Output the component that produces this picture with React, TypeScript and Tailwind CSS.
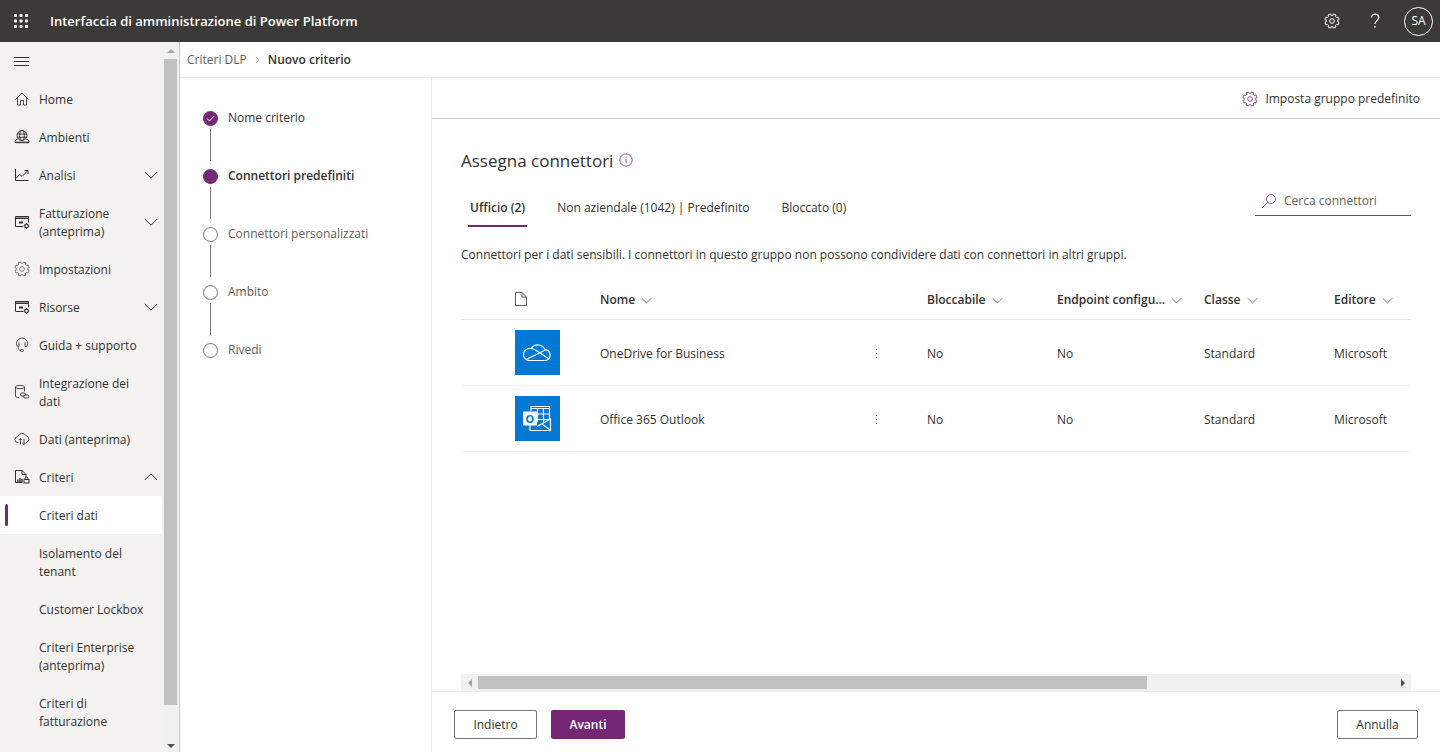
import { useState } from 'react';
import type { ReactNode } from 'react';
import clsx from 'clsx';

interface IconProps {
  className?: string;
}

interface NavItem {
  label: string;
  icon?: ReactNode;
  expand?: 'down' | 'up';
  active?: boolean;
}

// Outline of an eight-toothed gear on a 16x16 grid
const gearPoints = Array.from({ length: 8 }, (_, i) => {
  const corners: [number, number][] = [[-15, 5.6], [-11, 7.2], [11, 7.2], [15, 5.6]];
  return corners
    .map(([offset, r]) => {
      const a = ((i * 45 + 22.5 + offset) * Math.PI) / 180;
      return `${(8 + r * Math.cos(a)).toFixed(2)},${(8 + r * Math.sin(a)).toFixed(2)}`;
    })
    .join(' ');
}).join(' ');

function Icon({ className, children }: IconProps & { children: ReactNode }) {
  return (
    <svg
      viewBox="0 0 16 16"
      fill="none"
      stroke="currentColor"
      aria-hidden="true"
      className={clsx('shrink-0', className ?? 'h-4 w-4')}
    >
      {children}
    </svg>
  );
}

function GearIcon({ className }: IconProps) {
  return (
    <Icon className={className}>
      <polygon points={gearPoints} strokeLinejoin="round" />
      <circle cx="8" cy="8" r="2.3" />
    </Icon>
  );
}

function HomeIcon() {
  return (
    <Icon className="h-4 w-4 text-[#484644]">
      <path d="M1.5 8.5 8 2l6.5 6.5M3.5 7v7h3V9.5h3V14h3V7" />
    </Icon>
  );
}

function GlobeIcon() {
  return (
    <Icon>
      <circle cx="8" cy="6.5" r="5" />
      <ellipse cx="8" cy="6.5" rx="2.3" ry="5" />
      <path d="M3 5h10M3 8.3h10M3.5 10.5H2L.8 13.2h14.4L14 10.5h-1.5M1 13.7h14" />
    </Icon>
  );
}

function ChartIcon() {
  return (
    <Icon>
      <path d="M1.5 2v11.5h13M2 11.5l3.5-4 2.5 2L13.5 4M10.5 3.5H14V7" />
    </Icon>
  );
}

function WindowGearIcon() {
  return (
    <Icon>
      <path d="M9.5 12.5h-8v-10h13v6M1.5 4.5h13M1 3h14" />
      <path d="M5 8.5h4M6 7v3M8 7v3" />
      <circle cx="12.5" cy="12" r="1.8" strokeWidth="1.2" />
      <path d="M12.5 9.2v1M12.5 13.8v1M9.7 12h1M14.3 12h1" />
    </Icon>
  );
}

function HeadsetIcon() {
  return (
    <Icon className="h-4 w-4 text-[#484644]">
      <path d="M3.5 9.5C2.8 8.500 2.5 7.500 2.5 6.500a5.500 5.500 0 0 1 11 0c0 1-.3 2-1 3M3.500 9.500h1.500v-4M12.500 9.500H11v-4M4 10.500c.5 2 1.200 3 2.500 3" />
      <rect x="6.5" y="12.5" width="3" height="2" rx="1" />
    </Icon>
  );
}

function DatabaseLinkIcon() {
  return (
    <Icon className="h-4 w-4 text-[#484644]">
      <ellipse cx="6" cy="3" rx="4.5" ry="1.7" />
      <path d="M1.5 3v9c0 1 1.5 1.6 3.5 1.7M10.5 3v4.5" />
      <rect x="6.5" y="9" width="5" height="3" rx="1.5" />
      <rect x="9.5" y="11" width="5.5" height="3" rx="1.5" />
    </Icon>
  );
}

function CloudSyncIcon() {
  return (
    <Icon className="h-4 w-4 text-[#484644]">
      <path d="M4.5 11.5H4a2.9 2.9 0 0 1-.3-5.8 4.5 4.5 0 0 1 8.4-.9 3.4 3.4 0 0 1-.1 6.7" />
      <path d="M6.5 13.5v-6M4.8 9l1.7-1.7L8.2 9M10 7.5v6M8.3 12l1.7 1.7 1.7-1.7" />
    </Icon>
  );
}

function PolicyIcon() {
  return (
    <Icon>
      <path d="M8.5 13.5h-7v-12H8l4 4v3M8 1.5v4h4" />
      <path d="M4 13v-2.5M6 13V9M8 13v-3" strokeWidth="1.4" />
      <rect x="10" y="10.5" width="5" height="3.5" />
      <path d="M11.2 10.5V9.3a1.3 1.3 0 0 1 2.6 0v1.2" />
    </Icon>
  );
}

function PageIcon() {
  return (
    <svg viewBox="0 0 12 14" fill="none" stroke="#605e5c" className="h-[14px] w-[12px]" aria-hidden="true">
      <path d="M.5.5H7L11.500 5v8.500H.5zM7 .5V5h4.500" />
    </svg>
  );
}

function SearchIcon() {
  return (
    <Icon className="h-4 w-4 text-[#8f528f]">
      <circle cx="10" cy="6" r="4.5" />
      <path d="M6.8 9.2 1 15" />
    </Icon>
  );
}

function InfoIcon() {
  return (
    <Icon className="h-4 w-4 text-[#8f528f]">
      <circle cx="8" cy="7" r="6.2" />
      <path d="M8 6v4.5M8 3.5v1" />
    </Icon>
  );
}

function Chevron({ up = false, className }: IconProps & { up?: boolean }) {
  return (
    <svg
      viewBox="0 0 14 8"
      fill="none"
      stroke="currentColor"
      aria-hidden="true"
      className={clsx('shrink-0', className)}
    >
      <path d={up ? 'M.8 7 7 .8 13.2 7' : 'M.8 1 7 7.2 13.2 1'} />
    </svg>
  );
}

function OneDriveTile() {
  return (
    <svg
      viewBox="0 0 45 45"
      fill="none"
      stroke="white"
      strokeWidth="1.2"
      className="h-[45px] w-[45px] bg-[#0078d4]"
      role="img"
      aria-label="OneDrive"
    >
      <path d="M14.5 30.5a6 6 0 0 1 0-12h1.8a7.8 7.8 0 0 1 13.7 1.2 5.500 5.500 0 0 1 1 10.800z" />
      <path d="M11 29.500 24.500 23q3.500-2 6-3M16 18.500q2.500 0 5 1.700L34 29" />
    </svg>
  );
}

function OutlookTile() {
  return (
    <svg
      viewBox="0 0 45 45"
      fill="none"
      stroke="white"
      strokeWidth="1.2"
      className="h-[45px] w-[45px] bg-[#0078d4]"
      role="img"
      aria-label="Outlook"
    >
      <path d="M16 15v-4.500h18.500V23M16 12.500h18.500M22 18h12.500M22 23.500h12M22.500 12.500v13M28.500 12.500V26" />
      <path d="M15 29v5.500h20.500V23L22 30.500M27 28l8 6" />
      <rect x="8" y="15.5" width="14" height="14" rx="1" fill="white" stroke="none" />
      <text x="15" y="26.5" textAnchor="middle" fill="#0078d4" stroke="none" fontSize="11" fontWeight="700">
        O
      </text>
    </svg>
  );
}

const navItems: NavItem[] = [
  { label: 'Home', icon: <HomeIcon /> },
  { label: 'Ambienti', icon: <GlobeIcon /> },
  { label: 'Analisi', icon: <ChartIcon />, expand: 'down' },
  { label: 'Fatturazione (anteprima)', icon: <WindowGearIcon />, expand: 'down' },
  { label: 'Impostazioni', icon: <GearIcon className="h-4 w-4 text-[#797775]" /> },
  { label: 'Risorse', icon: <WindowGearIcon />, expand: 'down' },
  { label: 'Guida + supporto', icon: <HeadsetIcon /> },
  { label: 'Integrazione dei dati', icon: <DatabaseLinkIcon /> },
  { label: 'Dati (anteprima)', icon: <CloudSyncIcon /> },
  { label: 'Criteri', icon: <PolicyIcon />, expand: 'up' },
  { label: 'Criteri dati', active: true },
  { label: 'Isolamento del tenant' },
  { label: 'Customer Lockbox' },
  { label: 'Criteri Enterprise (anteprima)' },
  { label: 'Criteri di fatturazione' },
];

const steps = [
  { label: 'Nome criterio', state: 'done' },
  { label: 'Connettori predefiniti', state: 'current' },
  { label: 'Connettori personalizzati', state: 'todo' },
  { label: 'Ambito', state: 'todo' },
  { label: 'Rivedi', state: 'todo' },
];

const tabs = ['Ufficio (2)', 'Non aziendale (1042) | Predefinito', 'Bloccato (0)'];

const connectors = [
  { name: 'OneDrive for Business', tile: <OneDriveTile /> },
  { name: 'Office 365 Outlook', tile: <OutlookTile /> },
];

function Header() {
  return (
    <header className="flex h-[42px] shrink-0 items-center bg-[#3b3a39] pl-[14px] pr-[7px] text-white">
      <button aria-label="Avvio app">
        <svg viewBox="0 0 14 14" fill="currentColor" className="h-[14px] w-[14px]" aria-hidden="true">
          {[0, 5.5, 11].map((y) =>
            [0, 5.5, 11].map((x) => <rect key={`${x}-${y}`} x={x} y={y} width="3" height="3" rx="1" />)
          )}
        </svg>
      </button>
      <h1 className="ml-[22px] flex-1 text-[13px] font-semibold">
        Interfaccia di amministrazione di Power Platform
      </h1>
      <button aria-label="Impostazioni" className="mr-[27px]">
        <GearIcon />
      </button>
      <button aria-label="Guida" className="mr-[21px] w-4">
        <svg
          viewBox="0 0 16 16"
          fill="none"
          stroke="currentColor"
          strokeWidth="1.2"
          className="h-4 w-4"
          aria-hidden="true"
        >
          <path d="M4.5 4.5C4.5 2.5 6 1.2 8 1.2s3.7 1.2 3.7 3.3c0 3-3.7 3.2-3.7 6.5M8 13v1.8" />
        </svg>
      </button>
      <button className="h-[29px] w-[29px] rounded-full border border-white">SA</button>
    </header>
  );
}

function Sidebar() {
  return (
    <aside className="flex w-[180px] shrink-0 border-r border-[#c8c6c4] bg-[#f3f2f1]">
      <nav className="w-[162px] overflow-hidden">
        <button aria-label="Comprimi menu" className="flex h-[38px] items-center pl-[14px]">
          <svg viewBox="0 0 15 11" stroke="currentColor" className="h-[11px] w-[15px]" aria-hidden="true">
            <path d="M0 1.5h15M0 5.5h15M0 9.5h15" />
          </svg>
        </button>
        <ul>
          {navItems.map((item) => (
            <li key={item.label}>
              <a
                href="#"
                aria-current={item.active ? 'page' : undefined}
                className={clsx('flex items-center pr-[4px]', item.active && 'rounded-r-xs bg-white font-medium')}
              >
                <span className={clsx('ml-[5px] h-[22px] w-[3px] rounded-full', item.active && 'bg-[#742774]')} />
                <span className="ml-[6px] mr-[9px] w-4">{item.icon}</span>
                <span className={clsx('flex-1 pb-[9px] pt-[11px]', !item.expand && 'pr-[14px]')}>{item.label}</span>
                {item.expand && <Chevron up={item.expand === 'up'} className="h-[8px] w-[14px]" />}
              </a>
            </li>
          ))}
        </ul>
      </nav>
      {/* Scrollbar */}
      <div className="flex w-[17px] flex-col items-center bg-[#f1f1f1]">
        <div className="flex h-[17px] items-center">
          <svg viewBox="0 0 8 4" className="h-[4px] w-[8px]" fill="#a3a3a3" aria-hidden="true">
            <path d="M0 4 4 0l4 4z" />
          </svg>
        </div>
        <div className="flex w-[13px] flex-1 flex-col">
          <div className="h-[95%] bg-[#c1c1c1]" />
        </div>
        <div className="flex h-[13px] items-center">
          <svg viewBox="0 0 8 4" className="h-[4px] w-[8px]" fill="#505050" aria-hidden="true">
            <path d="M0 0l4 4 4-4z" />
          </svg>
        </div>
      </div>
    </aside>
  );
}

function Steps() {
  return (
    <ol className="flex w-[252px] shrink-0 flex-col border-r border-[#edebe9] pl-[23px] pt-8">
      {steps.map((step, i) => (
        <li key={step.label} aria-current={step.state === 'current' ? 'step' : undefined}>
          <div
            className={clsx(
              'flex h-4 items-center gap-[10px]',
              step.state === 'todo' && 'text-[#605e5c]',
              step.state === 'current' && 'font-semibold'
            )}
          >
            <span
              className={clsx(
                'flex h-[15px] w-[15px] items-center justify-center rounded-full border',
                step.state === 'todo' ? 'border-[#797775]' : 'border-[#742774] bg-[#742774]'
              )}
            >
              {step.state === 'done' && (
                <svg viewBox="0 0 9 9" fill="none" stroke="white" className="h-[9px] w-[9px]" aria-hidden="true">
                  <path d="M1 4.5 3.5 7 8 2.2" />
                </svg>
              )}
            </span>
            {step.label}
          </div>
          {i < steps.length - 1 && <div className="mb-[7px] ml-[7px] mt-[3px] h-8 w-px bg-[#797775]" />}
        </li>
      ))}
    </ol>
  );
}

function ColumnHeader({ label, className }: { label: string; className?: string }) {
  return (
    <th className={clsx('pt-[3px] font-semibold', className)}>
      <button className="flex w-full items-center gap-[6px] text-left">
        <span className="truncate">{label}</span>
        <Chevron className="h-[7px] w-[11px] text-[#605e5c]" />
      </button>
    </th>
  );
}

function ConnectorTable() {
  return (
    <table className="mt-[15px] w-full table-fixed text-left">
      <thead>
        <tr className="h-[40px] border-b border-[#edebe9]">
          <th className="w-[54px]" aria-label="Selezione" />
          <th className="w-[85px]" aria-label="Icona">
            <PageIcon />
          </th>
          <ColumnHeader label="Nome" />
          <th className="w-[62px]" aria-label="Azioni" />
          <ColumnHeader label="Bloccabile" className="w-[130px]" />
          <ColumnHeader label="Endpoint configu..." className="w-[147px]" />
          <ColumnHeader label="Classe" className="w-[130px]" />
          <ColumnHeader label="Editore" className="w-[77px]" />
        </tr>
      </thead>
      <tbody>
        {connectors.map((connector) => (
          <tr key={connector.name} className="h-[66px] border-b border-[#f3f2f1] *:pt-[3px]">
            <td />
            <td className="pb-[3px]">{connector.tile}</td>
            <td>{connector.name}</td>
            <td>
              <button
                aria-label={`Altre azioni per ${connector.name}`}
                className="flex h-4 w-6 items-center justify-center"
              >
                <svg viewBox="0 0 2 10" fill="#a4509f" className="h-[10px] w-[2px]" aria-hidden="true">
                  <path d="M0 0h1v1H0zM0 4h1v1H0zM0 8h1v1H0z" />
                </svg>
              </button>
            </td>
            <td>No</td>
            <td>No</td>
            <td>Standard</td>
            <td>Microsoft</td>
          </tr>
        ))}
      </tbody>
    </table>
  );
}

export default function App() {
  const [activeTab, setActiveTab] = useState(tabs[0]);

  return (
    <div className="flex h-screen flex-col overflow-hidden bg-white font-['Open_Sans','Noto_Sans',sans-serif] text-xs leading-[18px] text-[#323130]">
      <Header />
      <div className="flex min-h-0 flex-1">
        <Sidebar />
        <div className="flex min-w-0 flex-1 flex-col">
          <nav
            aria-label="Percorso"
            className="flex h-[36px] shrink-0 items-center border-b border-[#edebe9] pl-[7px] pt-px"
          >
            <a href="#" className="text-[#605e5c]">Criteri DLP</a>
            <svg
              viewBox="0 0 6 10"
              fill="none"
              stroke="#a19f9d"
              className="mx-[8px] h-[8px] w-[5px]"
              aria-hidden="true"
            >
              <path d="M1 1l4 4-4 4" />
            </svg>
            <span className="font-semibold">Nuovo criterio</span>
          </nav>
          <div className="flex min-h-0 flex-1">
            <Steps />
            <div className="flex min-w-0 flex-1 flex-col">
              <div className="flex h-[41px] shrink-0 items-center justify-end border-b border-[#c8c6c4] pr-[20px] pt-px">
                <button className="flex items-center gap-[7px]">
                  <GearIcon className="h-4 w-4 text-[#8f528f]" />
                  Imposta gruppo predefinito
                </button>
              </div>
              <main className="flex min-h-0 flex-1 flex-col px-[29px] pt-[30px]">
                <h2 className="flex items-center gap-[5px] text-[17px] leading-6">
                  Assegna connettori
                  <InfoIcon />
                </h2>
                <div className="mt-[13px] flex items-start justify-between">
                  <div role="tablist" className="flex gap-[28px] pl-[7px]">
                    {tabs.map((tab) => (
                      <button
                        key={tab}
                        role="tab"
                        aria-selected={tab === activeTab}
                        onClick={() => setActiveTab(tab)}
                        className={clsx(
                          'h-[41px] border-b-2 px-[2px] pt-[4px]',
                          tab === activeTab ? 'border-[#742774] font-semibold' : 'border-transparent'
                        )}
                      >
                        {tab}
                      </button>
                    ))}
                  </div>
                  <label className="flex h-[30px] w-[156px] items-center gap-[7px] border-b border-[#605e5c] pl-[6px]">
                    <SearchIcon />
                    <input
                      type="search"
                      aria-label="Cerca connettori"
                      placeholder="Cerca connettori"
                      className="min-w-0 flex-1 outline-none placeholder:text-[#605e5c]"
                    />
                  </label>
                </div>
                <p className="mt-[19px]">
                  Connettori per i dati sensibili. I connettori in questo gruppo non possono condividere dati con
                  connettori in altri gruppi.
                </p>
                <ConnectorTable />
                {/* Horizontal scrollbar */}
                <div className="mt-auto flex h-[17px] shrink-0 items-center bg-[#f1f1f1]">
                  <div className="flex w-[17px] justify-center">
                    <svg viewBox="0 0 4 8" className="h-[8px] w-[4px]" fill="#a3a3a3" aria-hidden="true">
                      <path d="M4 0 0 4l4 4z" />
                    </svg>
                  </div>
                  <div className="flex-1">
                    <div className="h-[13px] w-[73%] bg-[#c1c1c1]" />
                  </div>
                  <div className="flex w-[17px] justify-center">
                    <svg viewBox="0 0 4 8" className="h-[8px] w-[4px]" fill="#505050" aria-hidden="true">
                      <path d="M0 0l4 4-4 4z" />
                    </svg>
                  </div>
                </div>
              </main>
              <footer className="flex h-[61px] shrink-0 items-start border-t border-[#edebe9] px-[22px] pt-[18px]">
                <button className="h-[29px] w-[83px] rounded-xs border border-[#797775] font-medium">
                  Indietro
                </button>
                <button className="ml-[14px] h-[29px] w-[74px] rounded-xs bg-[#742774] font-semibold text-white">
                  Avanti
                </button>
                <button className="ml-auto h-[29px] w-[81px] rounded-xs border border-[#797775] font-medium">
                  Annulla
                </button>
              </footer>
            </div>
          </div>
        </div>
      </div>
    </div>
  );
}
